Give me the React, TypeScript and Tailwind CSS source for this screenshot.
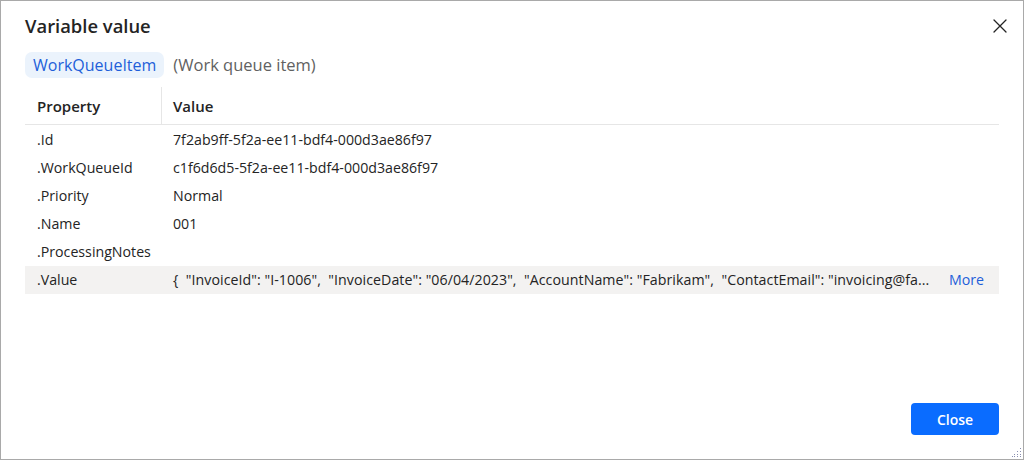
import React from "react";

const rows: [string, string][] = [
  [".Id", "7f2ab9ff-5f2a-ee11-bdf4-000d3ae86f97"],
  [".WorkQueueId", "c1f6d6d5-5f2a-ee11-bdf4-000d3ae86f97"],
  [".Priority", "Normal"],
  [".Name", "001"],
  [".ProcessingNotes", ""],
];

const longValue =
  '{  "InvoiceId": "I-1006",  "InvoiceDate": "06/04/2023",  "AccountName": "Fabrikam",  "ContactEmail": "invoicing@fa...';

export default function App() {
  return (
    <div
      className="w-[1024px] h-[460px] bg-white border border-[#a9a9a9] relative flex flex-col text-[#242424] overflow-hidden"
      style={{ fontFamily: '"Segoe UI", "Open Sans", "Liberation Sans", sans-serif' }}
    >
      <div className="flex items-center justify-between pl-[24px] pr-[11px] pt-[11px] h-[39px]">
        <div className="text-[18.4px] font-semibold leading-[26px]">Variable value</div>
        <button className="w-[24px] h-[24px] flex items-center justify-center text-[#242424]">
          <svg width="14" height="14" viewBox="0 0 14 14" fill="none">
            <path d="M1 1L13 13M13 1L1 13" stroke="#242424" strokeWidth="1.3" strokeLinecap="round" />
          </svg>
        </button>
      </div>
      <div className="flex items-center pl-[24px] mt-[12px] h-[26px] gap-[9px]">
        <span className="bg-[#ebf3fc] text-[#1e5fd9] text-[16px] px-[8px] h-[26px] leading-[26px] rounded-[7px]">
          WorkQueueItem
        </span>
        <span className="text-[#616161] text-[16.5px]">(Work queue item)</span>
      </div>
      <div className="mx-[24px] mt-[9px] text-[14.2px]">
        <div className="flex h-[38px] border-b border-[#e6e6e6] font-semibold text-[15px]">
          <div className="w-[137px] pl-[12px] flex items-center border-r border-[#e6e6e6] pt-[2px]">Property</div>
          <div className="flex-1 pl-[11px] flex items-center pt-[2px]">Value</div>
        </div>
        <div className="pt-[1px]">
          {rows.map(([k, v]) => (
            <div key={k} className="flex h-[28px] items-center">
              <div className="w-[136px] pl-[12px]">{k}</div>
              <div className="flex-1 pl-[12px]">{v}</div>
            </div>
          ))}
          <div className="flex h-[28px] items-center bg-[#f3f2f1]">
            <div className="w-[136px] pl-[12px] shrink-0">.Value</div>
            <div className="flex-1 min-w-0 pl-[12px] whitespace-pre tracking-[0.05px]">{longValue}</div>
            <a className="text-[#1e5fd9] pr-[15px] shrink-0">More</a>
          </div>
        </div>
      </div>
      <div className="flex-1" />
      <div className="flex justify-end pr-[24px] pb-[24px]">
        <button className="w-[88px] h-[32px] rounded-[4px] bg-[#0a6cff] text-white font-semibold text-[14px]">
          Close
        </button>
      </div>
      <svg className="absolute right-[1px] bottom-[1px]" width="10" height="10" viewBox="0 0 10 10">
        {[
          [8, 0], [8, 3], [5, 3], [8, 6], [5, 6], [2, 6], [8, 8], [5, 8], [2, 8], [0, 8],
        ].map(([x, y], i) => (
          <rect key={i} x={x} y={y} width="1" height="1" fill="#8a8fb0" />
        ))}
      </svg>
    </div>
  );
}
